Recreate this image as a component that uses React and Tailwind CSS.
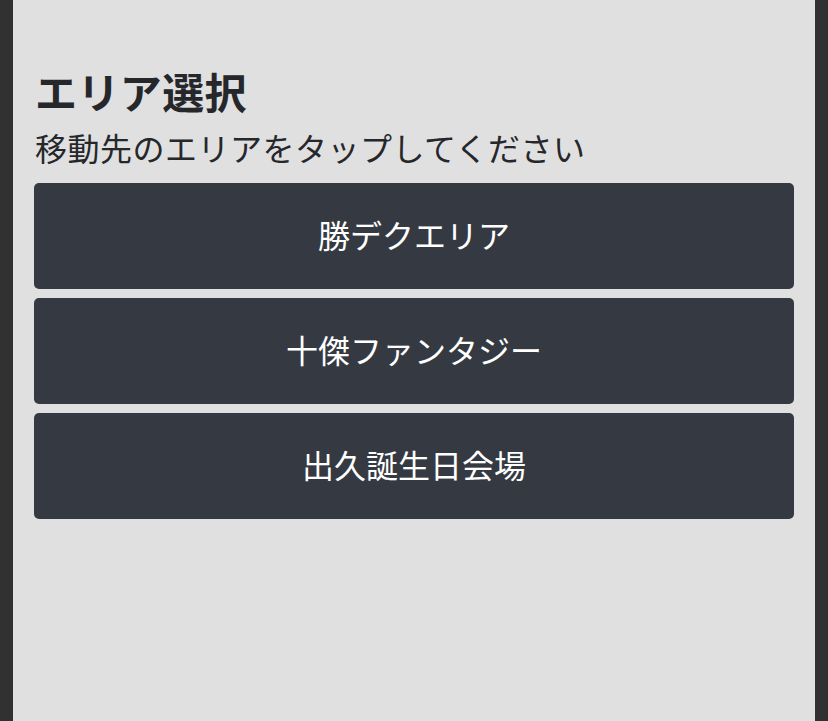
const areas = ['勝デクエリア', '十傑ファンタジー', '出久誕生日会場'];

export default function App() {
  return (
    <div
      className="h-[721px] w-[828px] bg-[#313131] px-[13px]"
      style={{ fontFamily: '"Noto Sans CJK JP", "Noto Sans", sans-serif' }}
    >
      <div className="h-full bg-[#e0e0e0] px-[21px] pt-[66px]">
        <h1 className="pl-[1px] text-[42px] font-bold leading-[50px] tracking-[0.4px] text-[#25272b]">
          エリア選択
        </h1>
        <p className="mt-[12px] pl-[1px] text-[32px] leading-[38px] tracking-[0.5px] text-[#25272b]">
          移動先のエリアをタップしてください
        </p>
        <div className="mt-[17px] flex flex-col gap-[9px]">
          {areas.map((name) => (
            <button
              key={name}
              className="flex h-[106px] w-full items-center justify-center rounded-[5px] bg-[#353a42] pb-[4px] text-[32px] text-white"
            >
              {name}
            </button>
          ))}
        </div>
      </div>
    </div>
  );
}
